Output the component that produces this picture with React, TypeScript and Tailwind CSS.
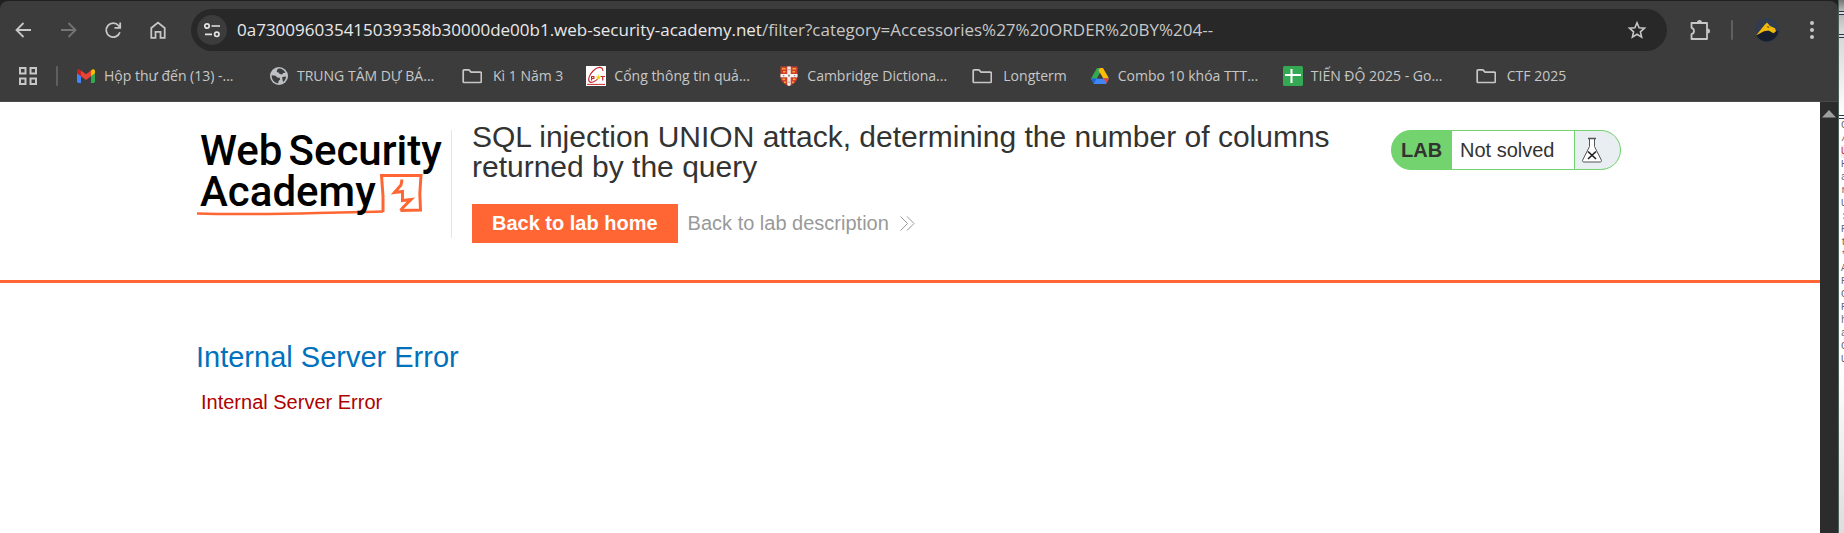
import type { ReactNode } from 'react';

const Folder = () => (
  <svg width="20" height="20" viewBox="0 0 20 20" fill="none" stroke="#c7c7c7" strokeWidth="1.7" strokeLinejoin="round" aria-hidden="true">
    <path d="M1.2 15.700V4.600a.8.8 0 0 1 .8-.8h4.900l2.200 2.300h9.400a.8.8 0 0 1 .8.8v8.800a.8.8 0 0 1-.8.8H2a.8.8 0 0 1-.8-.8z" />
  </svg>
);

const Gmail = () => (
  <svg width="20" height="20" viewBox="0 0 20 20" aria-hidden="true">
    <path fill="#4285f4" d="M1 7l4 3v7H2.400A1.400 1.400 0 0 1 1 15.600z" />
    <path fill="#34a853" d="M19 7l-4 3v7h2.600a1.400 1.400 0 0 0 1.400-1.400z" />
    <path fill="#fbbc04" d="M15 4.600l1.300-1c1.200-.8 2.700 0 2.700 1.400v2.200l-4 3z" />
    <path fill="#ea4335" d="M5 10.200V4.600l5 3.700 5-3.700v5.600l-5 3.800z" />
    <path fill="#c5221f" d="M1 5c0-1.400 1.500-2.200 2.700-1.400l1.300 1v5.600l-4-3z" />
  </svg>
);

const Globe = () => (
  <svg width="20" height="20" viewBox="0 0 20 20" aria-hidden="true">
    <circle cx="10" cy="10" r="9" fill="#bdc1c6" />
    <path fill="#3c3c3c" d="M9.500 2.600c2.800-.3 5.800 1.400 7 4.200l-2.300.2-1.200 1.500-2.200-.4-1.300-1.600-1.700-.5.3-2.200zM2.700 9.300l3.800.5 1.800 1.700 2.300.2.600 1.700-1.700 1.500-.3 2.500c-3.900-.4-6.900-4-6.500-8.100zM13.200 11l3.900-.6c-.2 2.300-1.300 4.400-3 5.600l-.6-2.200z" />
  </svg>
);

const Ptit = () => (
  <svg width="20" height="20" viewBox="0 0 20 20" aria-hidden="true">
    <rect width="20" height="20" fill="#fff" />
    <g fill="none" stroke="#c9292b">
      <path d="M17 5C16.500-.5 11 1 7.500 4.500S1.500 13 3.200 15.300s6 .5 8.800-2.800" strokeWidth="1.100" />
      <path d="M5.600 14.500v-4h2.300v2H5.600M14.500 10.500h4.500M16.700 10.500v4" strokeWidth="1.200" />
      <path d="M1 18.400h18" strokeWidth="1" />
    </g>
    <path fill="#f3d21b" d="M12.500 8.500l.7 1.900 2 .2-1.500 1.200.2 2-1.600-1-2.100 1 .8-2-1.200-1.200 1.900-.2z" />
  </svg>
);

const Cambridge = () => (
  <svg width="20" height="20" viewBox="0 0 20 20" aria-hidden="true">
    <path fill="#d2402c" d="M1.500.500h17V10c0 5-3.500 8.500-8.500 10-5-1.500-8.500-5-8.500-10z" />
    <path fill="#f1a33b" d="M3 2h3.500v1.500H3zM13.500 2H17v1.500h-3.500zM4 5h2.500v1.500H4zM13.500 5H16v1.500h-2.500zM3.500 12.500H6V14H3.500zM14 12.500h2.500V14H14zM5 15.500h2V17H5zM13 15.500h2V17h-2z" />
    <path fill="#f4f0ea" d="M8.300.500h3.400V8h6.800v3.300h-6.800v8l-1.700.7-1.700-.7v-8H1.500V8h6.800z" />
    <path fill="#8b8685" d="M9 8.800h2v1.800H9zM9.400 3h1.200v1.300H9.400zM9.400 15.500h1.200v1.300H9.400zM4 9h1.200v1.200H4zM15 9h1.200v1.200H15z" />
  </svg>
);

const Drive = () => (
  <svg width="20" height="20" viewBox="0 0 20 20" aria-hidden="true">
    <path fill="#34a853" d="M7 2h6L4.500 17 1 12.500z" />
    <path fill="#fbbc04" d="M10 2h3l6 10.500h-5.800L8.500 4.600z" />
    <path fill="#4285f4" d="M1 12.500h18L16 18H4z" />
    <path fill="#ea4335" d="M13.500 12.500H19L16.500 17z" />
    <path fill="#1a66d6" d="M1 12.500h5.700L3.800 17.700z" />
    <path fill="#3c3c3c" d="M10 7.300l3 5.200H7z" />
  </svg>
);

const Sheets = () => (
  <svg width="20" height="20" viewBox="0 0 20 20" aria-hidden="true">
    <rect width="20" height="20" rx="1.500" fill="#34a853" />
    <path stroke="#fff" strokeWidth="2" d="M2 9h16M8.500 3v14" />
  </svg>
);

const bookmarks: { label: string; icon: ReactNode; folder?: boolean }[] = [
  { label: 'Hộp thư đến (13) -...', icon: <Gmail /> },
  { label: 'TRUNG TÂM DỰ BÁ...', icon: <Globe /> },
  { label: 'Kì 1 Năm 3', icon: <Folder />, folder: true },
  { label: 'Cổng thông tin quả...', icon: <Ptit /> },
  { label: 'Cambridge Dictiona...', icon: <Cambridge /> },
  { label: 'Longterm', icon: <Folder />, folder: true },
  { label: 'Combo 10 khóa TTT...', icon: <Drive /> },
  { label: 'TIẾN ĐỘ 2025 - Go...', icon: <Sheets /> },
  { label: 'CTF 2025', icon: <Folder />, folder: true },
];

const background = ['C', '/', 'U', 'H', 'a', 'r', 'U', ':', 'P', 't', '*', 'A', 'P', 'C', 'P', 'h', 'a', 'C', 'U'];

function Toolbar() {
  return (
    <div className="flex items-center pt-[8px] pl-[13px] pr-[15px] text-[#c7c7c7]">
      <div className="flex w-[178px] shrink-0 gap-[25px]">
        <button aria-label="Back" className="flex size-5 items-center justify-center">
          <svg width="20" height="20" viewBox="0 0 20 20" fill="none" stroke="currentColor" strokeWidth="1.800"><path d="M18 10H4M10.500 3L3.500 10l7 7" /></svg>
        </button>
        <button aria-label="Forward" disabled className="flex size-5 items-center justify-center text-[#757575]">
          <svg width="20" height="20" viewBox="0 0 20 20" fill="none" stroke="currentColor" strokeWidth="1.800"><path d="M3 10h14M10.500 3l7 7-7 7" /></svg>
        </button>
        <button aria-label="Reload" className="flex size-5 items-center justify-center">
          <svg width="20" height="20" viewBox="0 0 20 20" fill="none" stroke="currentColor" strokeWidth="1.800"><path d="M16.900 12.200a7 7 0 1 1-1.200-6.500l1.300 1.800M17.200 2.500v5.300h-5.700" /></svg>
        </button>
        <button aria-label="Home" className="flex size-5 items-center justify-center">
          <svg width="20" height="20" viewBox="0 0 20 20" fill="none" stroke="currentColor" strokeWidth="1.800"><path d="M3.300 17.800V8L10 2.600 16.700 8v9.800h-4.200v-6h-5v6z" /></svg>
        </button>
      </div>
      <div className="flex h-[42px] min-w-0 flex-1 items-center rounded-full bg-[#282828] pl-[6px] pr-5">
        <button aria-label="View site information" className="flex size-[30px] shrink-0 items-center justify-center rounded-full bg-[#3c3c3c] text-[#e3e3e3]">
          <svg width="18" height="18" viewBox="0 0 18 18" fill="none" stroke="currentColor" strokeWidth="1.700"><circle cx="4" cy="5" r="2.200" /><path d="M8.500 5H17M2 13.300h7" /><circle cx="13.800" cy="13.300" r="2.200" /></svg>
        </button>
        <p className="ml-[10px] min-w-0 flex-1 truncate font-['Open_Sans','Noto_Sans',sans-serif] text-[17px] leading-6 text-[#c7c7c7]">
          <span className="text-[#e8e8e8]">0a730096035415039358b30000de00b1.web-security-academy.net</span>/filter?category=Accessories%27%20ORDER%20BY%204--
        </p>
        <button aria-label="Bookmark this tab" className="flex size-5 items-center justify-center">
          <svg width="20" height="20" viewBox="0 0 20 20" fill="none" stroke="currentColor" strokeWidth="1.600"><path d="M10 2.700l2.100 5 5.400.5-4.100 3.600 1.200 5.300-4.600-2.800-4.600 2.800 1.200-5.300-4.100-3.600 5.400-.5z" /></svg>
        </button>
      </div>
      <div className="flex shrink-0 items-center pl-[22px]">
        <button aria-label="Extensions" className="flex size-[22px] items-center justify-center">
          <svg width="22" height="22" viewBox="0 0 22 22" fill="none" stroke="currentColor" strokeWidth="1.800" strokeLinejoin="round"><path d="M2.500 4h15.500v16H2.500v-4.800a3.300 3.300 0 0 0 0-6.400z" /><path fill="currentColor" stroke="none" d="M8 3.500a2.500 2.500 0 0 1 5 0zM18.500 9.500a2.500 2.500 0 0 1 0 5z" /></svg>
        </button>
        <span className="ml-[20px] h-5 w-[2px] rounded bg-[#5f5f5f]" />
        <button aria-label="Profile" className="ml-[22px]">
          <svg className="block" width="24" height="24" viewBox="0 0 24 24"><circle cx="12" cy="12" r="12" fill="#303b4e" /><path d="M1 17l8-4h14.500A12 12 0 0 1 1 17z" fill="#171f2c" /><path d="M1 17.500L9.500 7l2.500-2.500 3 3.500 5 2.200 1 3-2.500 2-5-2.700-4.500.8z" fill="#f0b90b" /><path d="M12 8l2.300 1-1.300.8z" fill="#171f2c" /></svg>
        </button>
        <button aria-label="Menu" className="ml-[22px] flex size-[22px] items-center justify-center">
          <svg width="22" height="22" viewBox="0 0 22 22" fill="currentColor"><circle cx="11" cy="4" r="2" /><circle cx="11" cy="11" r="2" /><circle cx="11" cy="18" r="2" /></svg>
        </button>
      </div>
    </div>
  );
}

function BookmarksBar() {
  return (
    <nav aria-label="Bookmarks" className="flex h-[50px] items-center pl-[18px] text-[#c7c7c7]">
      <button aria-label="Apps" className="mr-[18px] flex size-5 items-center justify-center">
        <svg width="20" height="20" viewBox="0 0 20 20" fill="none" stroke="currentColor" strokeWidth="2"><path d="M2 2h5.500v5.500H2zM12.500 2H18v5.500h-5.500zM2 12.500h5.500V18H2zM12.500 12.500H18V18h-5.500z" /></svg>
      </button>
      <span className="mr-[18px] h-5 w-[2px] rounded bg-[#5f5f5f]" />
      {bookmarks.map((b) => (
        <a key={b.label} href="#" className={b.folder ? 'flex shrink-0 items-center gap-[11px] pr-[23px]' : 'flex w-[193px] shrink-0 items-center gap-2'}>
          {b.icon}
          <span className="whitespace-nowrap font-['Open_Sans','Noto_Sans',sans-serif] text-[14px] leading-5">{b.label}</span>
        </a>
      ))}
    </nav>
  );
}

function Logo() {
  return (
    <a href="#" className="relative block w-[256px] shrink-0 border-r border-[#e5e5e5] pl-1 font-['Roboto',sans-serif] text-[42px] font-medium leading-[41px] text-black">
      <svg className="absolute left-0 top-[42px]" width="230" height="46" viewBox="0 0 230 46" fill="none" stroke="#ff6633" aria-hidden="true">
        <path d="M1 41.500c30 1 80 .5 120-.5s50-1 66-1.500" strokeWidth="2.500" />
        <path d="M187 40V24l-1.500-20.500h39.500l-1.200 18 .7 16.500-20 .5" strokeWidth="3" />
        <path d="M206 7.500l-1 5.500-6.500 7.500 8-1v9l8.500-1-8 8-2.500 3" strokeWidth="3" />
      </svg>
      <span className="relative flex gap-[6px]"><span>Web</span><span>Security</span></span>
      <span className="relative block">Academy</span>
    </a>
  );
}

function LabHeader() {
  return (
    <header className="border-b-[3px] border-[#ff6633]">
      <div className="mx-auto flex w-full max-w-[1428px] items-start pt-5 pr-[3px] pb-[37px]">
        <div className="flex h-[116px] pt-2">
          <Logo />
        </div>
        <div className="ml-5 flex-1">
          <h2 className="max-w-[880px] text-[30px] leading-[30px] text-[#333332]">SQL injection UNION attack, determining the number of columns returned by the query</h2>
          <div className="mt-[22px] flex items-center gap-[10px] text-[20px] leading-[23px]">
            <a href="#" className="bg-[#ff6633] px-5 py-2 font-bold text-white">Back to lab home</a>
            <a href="#" className="flex items-center gap-[11px] text-[#999]">
              Back to lab description
              <svg width="15" height="15" viewBox="0 0 15 15" fill="none" stroke="#999" aria-hidden="true"><path d="M.5.500l7 7-7 7M7 .500l7 7-7 7" /></svg>
            </a>
          </div>
        </div>
        <div className="mt-2 flex h-10 w-[230px] shrink-0 overflow-hidden rounded-full border border-[#72d36f] bg-[#72d36f] text-[20px] leading-[38px] text-[#333332]">
          <span className="w-[60px] pl-[9px] font-bold">LAB</span>
          <span className="flex-1 bg-white pl-2">Not solved</span>
          <span className="ml-px flex w-[45px] items-center bg-[#e9eef2] pl-[7px]">
            <svg width="20" height="26" viewBox="0 0 20 26" fill="#fff" stroke="#555" aria-hidden="true"><path d="M7.500 1.500v8L.7 23c-.4 1 0 2 1 2h16.600c1 0 1.400-1 1-2L12.500 9.500v-8" /><path d="M6 1.500h8" strokeWidth="1.500" /><path d="M6 14.500l8 7.500M14 14.500L6 22" stroke="#222" strokeWidth="1.700" /></svg>
          </span>
        </div>
      </div>
    </header>
  );
}

function BackgroundWindow() {
  return (
    <aside className="flex w-[6px] shrink-0 flex-col overflow-hidden border-l border-[#4b5f5c] bg-white">
      <div className="h-[11px] bg-linear-to-b from-[#777] to-[#bbb]" />
      <div className="h-1 border-y border-[#2a3350] bg-[#ddd]" />
      <div className="h-[19px] bg-linear-to-b from-[#bbb] to-[#ddd]" />
      <div className="h-1 border-y border-[#2a3350] bg-[#ddd]" />
      <div className="h-[77px] bg-linear-to-b from-[#d8d8d8] to-white" />
      <div className="h-1 border-y border-[#2a3350] bg-white" />
      <div className="pl-[2px] font-['Liberation_Mono',monospace] text-[10px] leading-[13px] text-[#666]">
        {background.map((letter, i) => (
          <p key={i} className={i === 2 ? 'bg-[#fbe6ea] text-[#c03a4a]' : ''}>{letter}</p>
        ))}
      </div>
      <div className="flex-1 bg-linear-to-b from-white to-[#ddd]" />
    </aside>
  );
}

export default function App() {
  return (
    <div className="flex min-h-screen bg-[#202020] font-['Liberation_Sans',Arial,sans-serif]">
      <div className="flex min-w-0 flex-1 flex-col">
        <div className="mt-px rounded-t-lg border-b border-[#4a4a4a] bg-[#3c3c3c]">
          <Toolbar />
          <BookmarksBar />
        </div>
        <div className="flex flex-1">
          <main className="min-w-0 flex-1 bg-white">
            <LabHeader />
            <section className="mx-auto w-full max-w-[1428px] pt-[57px]">
              <h1 className="text-[29px] leading-[34px] text-[#0071bc]">Internal Server Error</h1>
              <p className="mt-[16px] pl-[5px] text-[20px] leading-6 text-[#b00000]">Internal Server Error</p>
            </section>
          </main>
          <div className="w-[18px] shrink-0 bg-[#2c2c2c] pt-2">
            <svg className="mx-auto block" width="14" height="8" viewBox="0 0 14 8" aria-hidden="true"><path d="M7 0l7 7.500H0z" fill="#9f9f9f" /></svg>
          </div>
        </div>
      </div>
      <BackgroundWindow />
    </div>
  );
}
